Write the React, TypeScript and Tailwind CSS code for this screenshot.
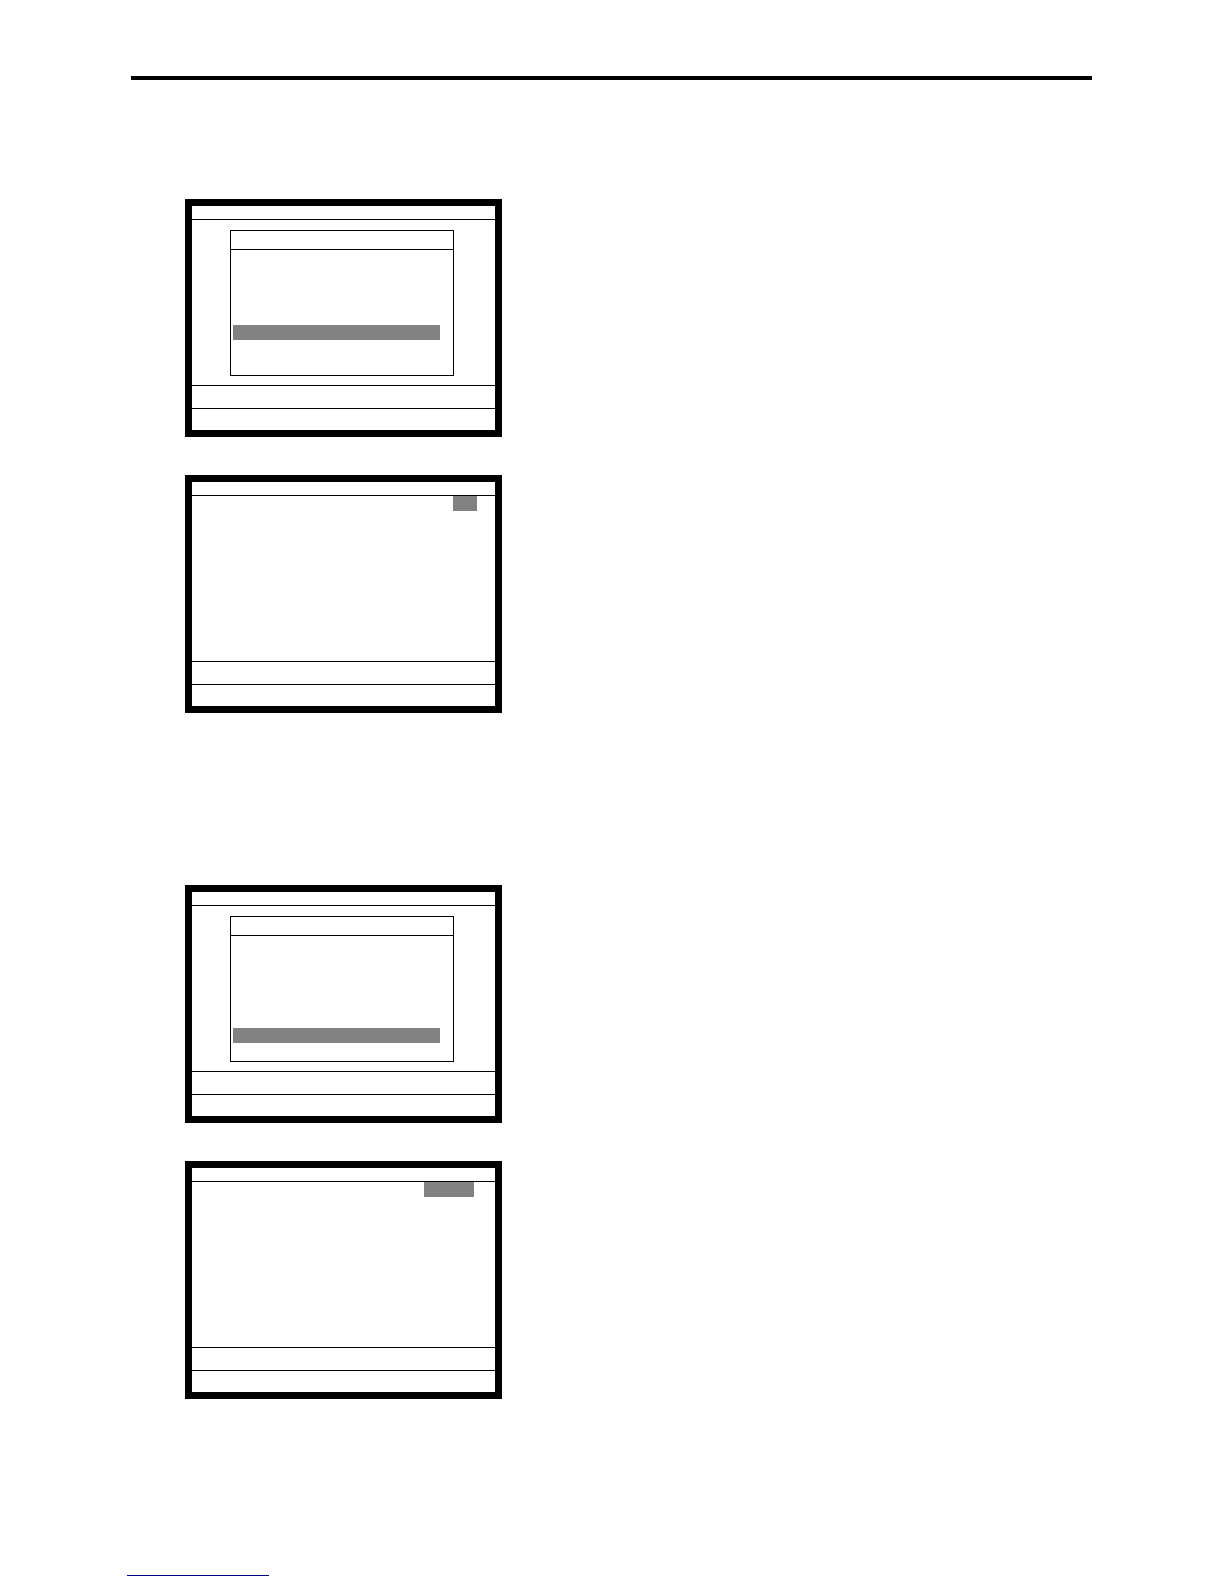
import React from "react";

type ScreenProps =
  | { kind: "dialog"; highlightTop: number }
  | { kind: "tag"; tagLeft: number; tagWidth: number };

function Screen(props: ScreenProps) {
  return (
    <div className="w-[317px] h-[238px] border-[7px] border-black bg-white flex flex-col">
      <div className="h-[14px] border-b border-black" />
      <div className="h-[166px] border-b border-black flex flex-col">
        {props.kind === "dialog" ? (
          <div className="ml-[38px] mt-[10px] w-[224px] h-[146px] border border-black flex flex-col">
            <div className="h-[19px] border-b border-black" />
            <div className="flex flex-col">
              {props.highlightTop === 75 ? (
                <div className="mt-[75px] ml-[2px] w-[207px] h-[15px] bg-[#828282]" />
              ) : (
                <div className="mt-[92px] ml-[2px] w-[207px] h-[15px] bg-[#828282]" />
              )}
            </div>
          </div>
        ) : props.tagWidth === 24 ? (
          <div className="ml-[261px] w-[24px] h-[15px] bg-[#828282]" />
        ) : (
          <div className="ml-[232px] w-[50px] h-[15px] bg-[#828282]" />
        )}
      </div>
      <div className="h-[23px] border-b border-black" />
      <div className="flex-1" />
    </div>
  );
}

export default function App() {
  return (
    <div className="w-[1224px] h-[1584px] bg-white font-['Liberation_Sans',sans-serif] flex flex-col">
      <div className="pt-[76px] pl-[131px]">
        <div className="w-[961px] h-[4px] bg-black" />
      </div>
      <div className="pl-[185px] mt-[119px] flex flex-col">
        <Screen kind="dialog" highlightTop={75} />
        <div className="h-[38px]" />
        <Screen kind="tag" tagLeft={261} tagWidth={24} />
        <div className="h-[172px]" />
        <Screen kind="dialog" highlightTop={92} />
        <div className="h-[38px]" />
        <Screen kind="tag" tagLeft={232} tagWidth={50} />
      </div>
      <div className="pl-[127px] mt-[176px]">
        <div className="w-[142px] h-px bg-[#000080]" />
      </div>
    </div>
  );
}
